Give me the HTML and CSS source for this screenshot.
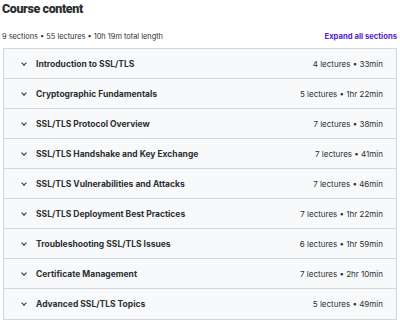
FILE: index.html
```html
<!DOCTYPE html>
<html lang="en">

<head>
    <meta charset="utf-8">
    <meta name="viewport" content="width=device-width, initial-scale=1.0">
    <title>Course content</title>
    <link rel="stylesheet" href="styles.css">
</head>

<body>
    <main class="curriculum">
        <h2 class="title">Course content</h2>
        <div class="summary">
            <span>9 sections • 55 lectures • 10h 19m total length</span>
            <button class="expand">Expand all sections</button>
        </div>
        <div class="sections">
            <div class="section">
                <div class="section_left"><span class="chevron"></span><span class="section_title">Introduction to SSL/TLS</span></div>
                <span class="section_meta">4 lectures • 33min</span>
            </div>
            <div class="section">
                <div class="section_left"><span class="chevron"></span><span class="section_title">Cryptographic Fundamentals</span></div>
                <span class="section_meta">5 lectures • 1hr 22min</span>
            </div>
            <div class="section">
                <div class="section_left"><span class="chevron"></span><span class="section_title">SSL/TLS Protocol Overview</span></div>
                <span class="section_meta">7 lectures • 38min</span>
            </div>
            <div class="section">
                <div class="section_left"><span class="chevron"></span><span class="section_title">SSL/TLS Handshake and Key Exchange</span></div>
                <span class="section_meta">7 lectures • 41min</span>
            </div>
            <div class="section">
                <div class="section_left"><span class="chevron"></span><span class="section_title">SSL/TLS Vulnerabilities and Attacks</span></div>
                <span class="section_meta">7 lectures • 46min</span>
            </div>
            <div class="section">
                <div class="section_left"><span class="chevron"></span><span class="section_title">SSL/TLS Deployment Best Practices</span></div>
                <span class="section_meta">7 lectures • 1hr 22min</span>
            </div>
            <div class="section">
                <div class="section_left"><span class="chevron"></span><span class="section_title">Troubleshooting SSL/TLS Issues</span></div>
                <span class="section_meta">6 lectures • 1hr 59min</span>
            </div>
            <div class="section">
                <div class="section_left"><span class="chevron"></span><span class="section_title">Certificate Management</span></div>
                <span class="section_meta">7 lectures • 2hr 10min</span>
            </div>
            <div class="section">
                <div class="section_left"><span class="chevron"></span><span class="section_title">Advanced SSL/TLS Topics</span></div>
                <span class="section_meta">5 lectures • 49min</span>
            </div>
        </div>
    </main>
</body>

</html>
```

FILE: styles.css
```css
* {
    box-sizing: border-box;
}

body {
    margin: 0;
    background: white;
    color: #2d2f31;
    font-family: 'Inter', sans-serif;
}

.curriculum {
    padding: 0 3px 0 2px;
}

.title {
    font-family: 'Roboto', sans-serif;
    font-size: 12.5px;
    font-weight: 900;
    letter-spacing: -0.4px;
    margin: 0;
    height: 28px;
    line-height: 17px;
}

.summary {
    display: flex;
    justify-content: space-between;
    align-items: center;
    font-size: 7.4px;
    height: 16px;
    margin-bottom: 4px;
}

.expand {
    border: none;
    background: none;
    padding: 0;
    font-family: 'Inter', sans-serif;
    font-size: 7.7px;
    font-weight: 700;
    color: #5624d0;
}

.sections {
    margin-left: 1px;
    border: 1px solid #d1d7dc;
}

.section {
    display: flex;
    justify-content: space-between;
    align-items: center;
    height: 30px;
    padding: 0 13px 0 16px;
    background: #f7f9fa;
    border-bottom: 1px solid #d1d7dc;
}

.section:last-child {
    border-bottom: none;
}

.section_left {
    display: flex;
    align-items: center;
}

.chevron {
    width: 4px;
    height: 4px;
    border-right: 1px solid #2d2f31;
    border-bottom: 1px solid #2d2f31;
    transform: rotate(45deg);
    margin: 0 10px 2px 2px;
}

.section_title {
    font-size: 8.5px;
    font-weight: 700;
}

.section_meta {
    font-size: 8px;
}
```
